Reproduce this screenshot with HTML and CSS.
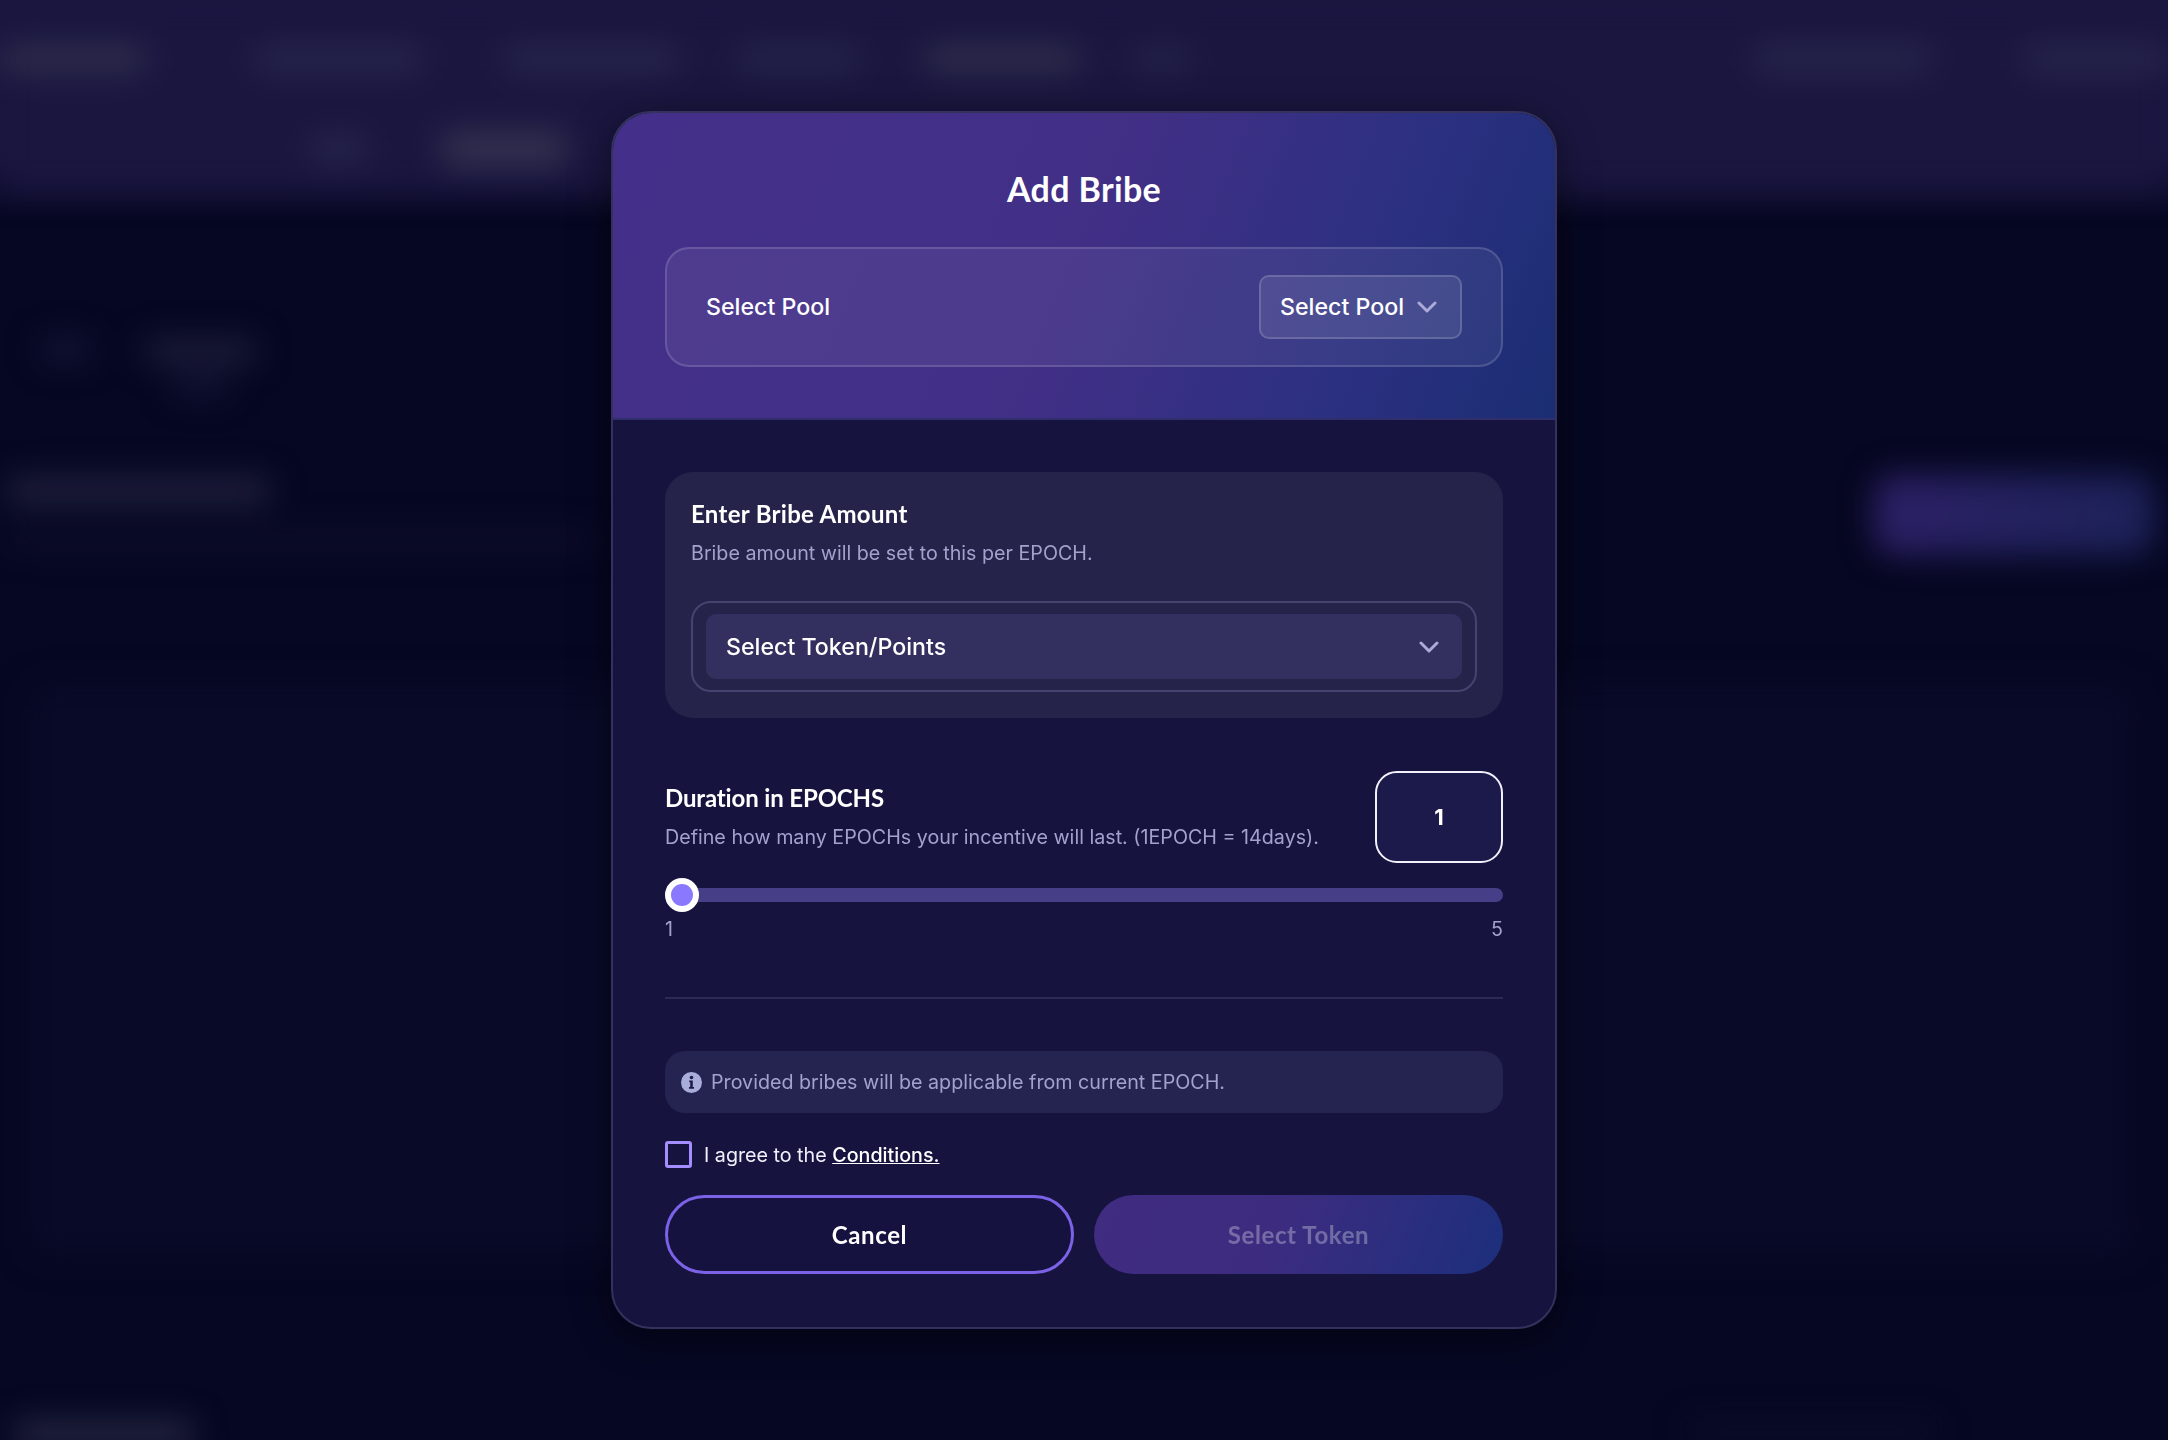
FILE: index.html
```html
<!DOCTYPE html>
<html lang="en">
<head>
  <meta charset="UTF-8" />
  <meta name="viewport" content="width=device-width, initial-scale=1.0"/>
  <title>Add Bribe</title>
  <link rel="stylesheet" href="styles.css">
</head>
<body>

  <!-- page behind the modal, blurred so only soft shapes are left -->
  <div class="page">
    <div class="top-band">
      <div class="nav">
        <div class="blob nav-logo"></div>
        <div class="blob nav-a"></div>
        <div class="blob nav-b"></div>
        <div class="blob nav-c"></div>
        <div class="blob nav-d"></div>
        <div class="blob nav-e"></div>
        <div class="blob nav-f"></div>
        <div class="blob nav-g"></div>
      </div>
      <div class="subnav">
        <div class="blob sub-a"></div>
        <div class="blob sub-b"></div>
      </div>
    </div>
    <div class="stats">
      <div class="blob stat-a"></div>
      <div class="stat-col">
        <div class="blob stat-b"></div>
        <div class="blob stat-c"></div>
      </div>
    </div>
    <div class="heading-row">
      <div>
        <div class="blob head-title"></div>
        <div class="blob head-sub"></div>
      </div>
      <div class="head-btn"></div>
    </div>
    <div class="big-card"></div>
    <div class="footer-row">
      <div class="blob foot-a"></div>
      <div class="blob foot-b"></div>
    </div>
  </div>

  <div class="overlay">
    <div class="modal">
      <div class="modal-head">
        <h2>Add Bribe</h2>
        <div class="pool-box">
          <span class="pool-label">Select Pool</span>
          <button class="pool-select">
            Select Pool
            <svg class="chev" viewBox="0 0 20 12" width="20" height="12"><polyline points="2,2 10,10 18,2"/></svg>
          </button>
        </div>
      </div>

      <div class="modal-body">
        <div class="amount-card">
          <h3>Enter Bribe Amount</h3>
          <p class="hint">Bribe amount will be set to this per EPOCH.</p>
          <div class="token-wrap">
            <button class="token-select">
              Select Token/Points
              <svg class="chev" viewBox="0 0 20 12" width="20" height="12"><polyline points="2,2 10,10 18,2"/></svg>
            </button>
          </div>
        </div>

        <div class="duration-row">
          <div>
            <h3 class="caps">Duration in EPOCHS</h3>
            <p class="hint">Define how many EPOCHs your incentive will last. (1EPOCH = 14days).</p>
          </div>
          <div class="duration-value">1</div>
        </div>

        <div class="slider">
          <div class="slider-thumb"></div>
        </div>
        <div class="slider-labels">
          <span>1</span>
          <span>5</span>
        </div>

        <div class="divider"></div>

        <div class="info-box">
          <svg class="info-icon" viewBox="0 0 20 20" width="21" height="21">
            <circle cx="10" cy="10" r="10" fill="#a9add9"/>
            <circle cx="10" cy="5.2" r="1.7" fill="#1d1a4a"/>
            <path d="M7.8 8.2h3.4v6.2h1.2v1.6H7.6v-1.6h1.2V9.8h-1z" fill="#1d1a4a"/>
          </svg>
          <span>Provided bribes will be applicable from current EPOCH.</span>
        </div>

        <label class="agree">
          <span class="check"></span>
          <span>I agree to the <a href="#">Conditions.</a></span>
        </label>

        <div class="actions">
          <button class="btn btn-cancel">Cancel</button>
          <button class="btn btn-select">Select Token</button>
        </div>
      </div>
    </div>
  </div>

</body>
</html>
```

FILE: styles.css
```css
* {
  box-sizing: border-box;
}

body {
  margin: 0;
  height: 1440px;
  overflow: hidden;
  /* same colours as the page, so the blur does not fade out at the window edge */
  background: linear-gradient(#1a1640 0, #1a1640 150px, #060722 220px);
  font-family: Inter, sans-serif;
  color: #fff;
}

/* blurred page */
.page {
  height: 1440px;
  filter: blur(16px);
}

.blob {
  height: 26px;
  border-radius: 6px;
  background: #2a2846;
}

.top-band {
  height: 190px;
  background: #1a1640;
  padding-top: 46px;
}

.nav {
  display: flex;
}

.nav-logo { width: 145px; background: #302f4c; }
.nav-a { width: 166px; margin-left: 111px; background: #27254d; }
.nav-b { width: 173px; margin-left: 83px; background: #27254d; }
.nav-c { width: 117px; margin-left: 62px; background: #25244c; }
.nav-d { width: 152px; margin-left: 69px; background: #302f4c; }
.nav-e { width: 56px; margin-left: 56px; background: #232149; }
.nav-f { width: 173px; margin-left: 566px; background: #29274d; }
.nav-g { width: 142px; margin-left: 97px; background: #29274d; }

.subnav {
  display: flex;
  margin-top: 64px;
}

.sub-a { width: 55px; margin-left: 311px; background: #27254d; }
.sub-b { width: 125px; margin-left: 76px; height: 34px; margin-top: -4px; background: #34324f; }

.stats {
  display: flex;
  padding-top: 149px;
}

.stat-a { width: 49px; margin-left: 41px; height: 22px; background: #16173a; }

.stat-col {
  margin-left: 55px;
}

.stat-b { width: 111px; height: 24px; background: #1e1f3c; }
.stat-c { width: 56px; height: 18px; margin: 14px 0 0 28px; background: #16173a; }

.heading-row {
  display: flex;
  justify-content: space-between;
  padding: 82px 14px 0 7px;
}

.head-title { width: 263px; height: 28px; background: #20203e; }
.head-sub { width: 588px; height: 14px; margin-top: 28px; background: #10112e; }

.head-btn {
  width: 280px;
  height: 80px;
  margin-top: -2px;
  border-radius: 20px;
  background: linear-gradient(100deg, #2c2066, #1c2258);
}

.big-card {
  height: 573px;
  margin: 129px 32px 0 28px;
  border-radius: 20px;
  background: #090a28;
}

.footer-row {
  display: flex;
  justify-content: space-between;
  padding: 165px 232px 0 14px;
}

.foot-a { width: 180px; height: 24px; background: #2a2a44; }
.foot-b { width: 249px; height: 16px; background: #0e0f2c; }

/* modal */
.overlay {
  position: fixed;
  top: 0;
  left: 0;
  width: 100%;
  height: 100%;
  display: flex;
  align-items: center;
  justify-content: center;
}

.modal {
  width: 946px;
  border: 2px solid #34325c;
  border-radius: 40px;
  overflow: hidden;
  background: #16133f;
  box-shadow: 0 8px 40px rgba(0, 0, 0, .45);
}

.modal-head {
  padding: 56px 52px 51px;
  background: linear-gradient(112deg, #44308a 0%, #422f86 48%, #2c3080 78%, #1a2d73 100%);
  border-bottom: 2px solid #302e6c;
}

h2 {
  margin: 0 0 38px;
  font-family: Lato, sans-serif;
  font-size: 34px;
  font-weight: 700;
  letter-spacing: .35px;
  line-height: 40px;
  text-align: center;
}

.pool-box {
  height: 120px;
  padding: 0 39px;
  display: flex;
  align-items: center;
  justify-content: space-between;
  border: 2px solid rgba(255, 255, 255, .15);
  border-radius: 24px;
  background: rgba(255, 255, 255, .06);
}

.pool-label,
.pool-select,
.token-select {
  font-family: Inter, sans-serif;
  font-size: 23.2px;
  font-weight: 500;
  color: #fff;
}

.pool-select {
  height: 64px;
  width: 203px;
  padding: 0 0 0 19px;
  display: flex;
  align-items: center;
  gap: 13px;
  border: 2px solid rgba(255, 255, 255, .16);
  border-radius: 10px;
  background: rgba(255, 255, 255, .09);
}

.chev {
  fill: none;
  stroke: #abaad9;
  stroke-width: 3;
  stroke-linecap: round;
  stroke-linejoin: round;
}

.modal-body {
  padding: 52px 52px 53px;
}

.amount-card {
  padding: 27px 26px 26px;
  border-radius: 28px;
  background: #25234a;
}

h3 {
  margin: 0;
  font-family: Lato, sans-serif;
  font-size: 24px;
  font-weight: 700;
  letter-spacing: .3px;
  line-height: 30px;
}

h3.caps {
  letter-spacing: -.15px;
}

.hint {
  margin: 10px 0 0;
  font-size: 19.7px;
  line-height: 28px;
  color: #a3a1cd;
}

.token-wrap {
  margin-top: 34px;
  padding: 11px 13px;
  border: 2px solid #45436f;
  border-radius: 20px;
}

.token-select {
  width: 100%;
  height: 65px;
  padding: 0 23px 0 20px;
  display: flex;
  align-items: center;
  justify-content: space-between;
  border: none;
  border-radius: 10px;
  background: #332f5e;
}

.duration-row {
  display: flex;
  align-items: center;
  justify-content: space-between;
  margin-top: 53px;
}

.duration-value {
  width: 128px;
  height: 92px;
  display: flex;
  align-items: center;
  justify-content: center;
  border: 2px solid #f2f1fb;
  border-radius: 22px;
  background: #1c1a4b;
  font-size: 22px;
  font-weight: 700;
}

.slider {
  position: relative;
  height: 14px;
  margin-top: 25px;
  border-radius: 7px;
  background: #463e86;
}

.slider-thumb {
  position: absolute;
  left: 0;
  top: -10px;
  width: 34px;
  height: 34px;
  border: 6px solid #fff;
  border-radius: 50%;
  background: #8a78ff;
}

.slider-labels {
  display: flex;
  justify-content: space-between;
  margin-top: 15px;
  font-size: 19.7px;
  line-height: 24px;
  color: #a3a1cd;
}

.divider {
  height: 2px;
  margin-top: 56px;
  background: #2d2b55;
}

.info-box {
  height: 62px;
  margin-top: 52px;
  padding: 0 16px;
  display: flex;
  align-items: center;
  gap: 9px;
  border-radius: 20px;
  background: #25234f;
  font-size: 19.7px;
  color: #a3a1cd;
}

.agree {
  display: flex;
  align-items: center;
  gap: 12px;
  margin-top: 28px;
  font-size: 19.7px;
  line-height: 26px;
  color: #f1f0fa;
}

.agree a {
  color: #fff;
  font-weight: 500;
}

.check {
  width: 27px;
  height: 27px;
  border: 3px solid #a48dff;
  border-radius: 3px;
}

.actions {
  display: grid;
  grid-template-columns: 1fr 1fr;
  gap: 20px;
  margin-top: 27px;
}

.btn {
  height: 79px;
  border-radius: 40px;
  font-family: Lato, sans-serif;
  font-size: 24px;
  font-weight: 700;
  letter-spacing: .6px;
}

.btn-cancel {
  border: 3px solid #7b62e6;
  background: #15123f;
  color: #fff;
}

.btn-select {
  border: none;
  background: linear-gradient(112deg, #402c80 0%, #3c2c80 45%, #1c2f7c 100%);
  color: rgba(255, 255, 255, .3);
}
```
